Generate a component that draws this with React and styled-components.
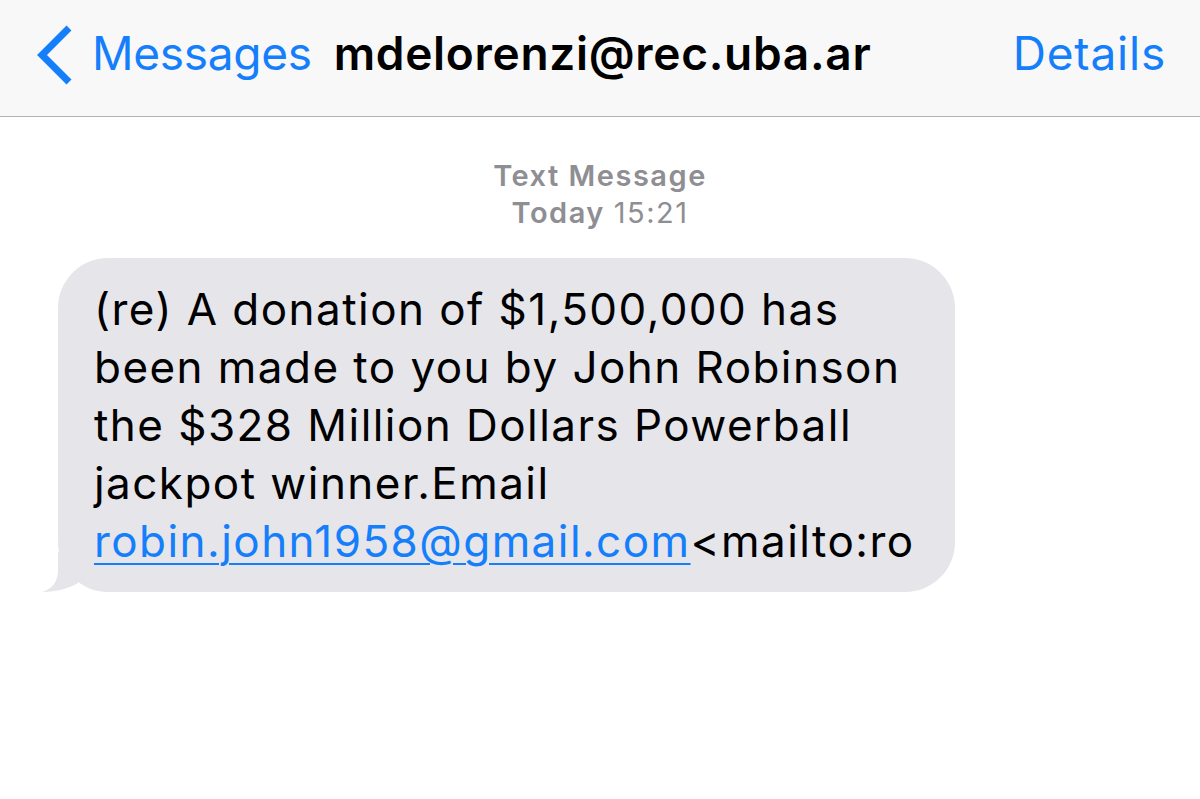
import styled, { createGlobalStyle } from "styled-components";

const GlobalStyle = createGlobalStyle`
  html, body {
    margin: 0;
    padding: 0;
    background: #ffffff;
  }
  body {
    font-family: Inter, "Liberation Sans", sans-serif;
    -webkit-font-smoothing: antialiased;
  }
`;

const Screen = styled.div`
  width: 1200px;
  height: 799px;
  background: #ffffff;
  overflow: hidden;
`;

const NavBar = styled.header`
  height: 117px;
  box-sizing: border-box;
  background: #f8f8f8;
  border-bottom: 1px solid #b2b2b2;
  display: flex;
  align-items: center;
  padding: 0 34px 10px 36px;
  font-size: 46px;
`;

const Back = styled.a`
  display: flex;
  align-items: center;
  gap: 20px;
  color: #157efb;
  text-decoration: none;
  letter-spacing: -0.3px;
  svg {
    margin-top: 4px;
  }
`;

const Title = styled.h1`
  margin: 0 0 0 22px;
  font-size: 46px;
  font-weight: 600;
  color: #000;
  letter-spacing: 0.7px;
`;

const Details = styled.a`
  margin-left: auto;
  color: #157efb;
  text-decoration: none;
  letter-spacing: 0.8px;
`;

const Thread = styled.main`
  padding: 40px 0 0 0;
`;

const Stamp = styled.div`
  text-align: center;
  color: #8e8e93;
  font-size: 29px;
  line-height: 37px;
  font-weight: 600;
  letter-spacing: 1.5px;
  span {
    font-weight: 400;
  }
`;

const Row = styled.div`
  padding: 27px 0 0 58px;
`;

const Bubble = styled.div`
  position: relative;
  width: 897px;
  box-sizing: border-box;
  background: #e5e5ea;
  border-radius: 50px;
  padding: 22px 20px 22px 36px;
  font-size: 44px;
  line-height: 58px;
  color: #000;
  letter-spacing: 1.45px;
`;

const Tail = styled.svg`
  position: absolute;
  left: -18px;
  bottom: 0;
`;

const Link = styled.a`
  color: #157efb;
  text-decoration: underline;
  text-underline-offset: 6px;
  text-decoration-thickness: 2px;
`;

export default function App() {
  return (
    <Screen>
      <GlobalStyle />
      <NavBar>
        <Back href="#">
          <svg width="36" height="60" viewBox="0 0 36 60">
            <path d="M33 3 L6 30 L33 57" fill="none" stroke="#157efb" strokeWidth="7" />
          </svg>
          Messages
        </Back>
        <Title>mdelorenzi@rec.uba.ar</Title>
        <Details href="#">Details</Details>
      </NavBar>
      <Thread>
        <Stamp>
          Text Message
          <br />
          Today <span>15:21</span>
        </Stamp>
        <Row>
          <Bubble>
            <Tail width="40" height="40" viewBox="0 0 40 40">
              <path d="M18 0 L18 18 C18 30 12 37 2 40 C16 40 30 36 38 31 L38 0 Z" fill="#e5e5ea" />
            </Tail>
            (re) A donation of $1,500,000 has
            <br />
            been made to you by John Robinson
            <br />
            the $328 Million Dollars Powerball
            <br />
            jackpot winner.Email
            <br />
            <Link href="#">robin.john1958@gmail.com</Link>&lt;mailto:ro
          </Bubble>
        </Row>
      </Thread>
    </Screen>
  );
}
